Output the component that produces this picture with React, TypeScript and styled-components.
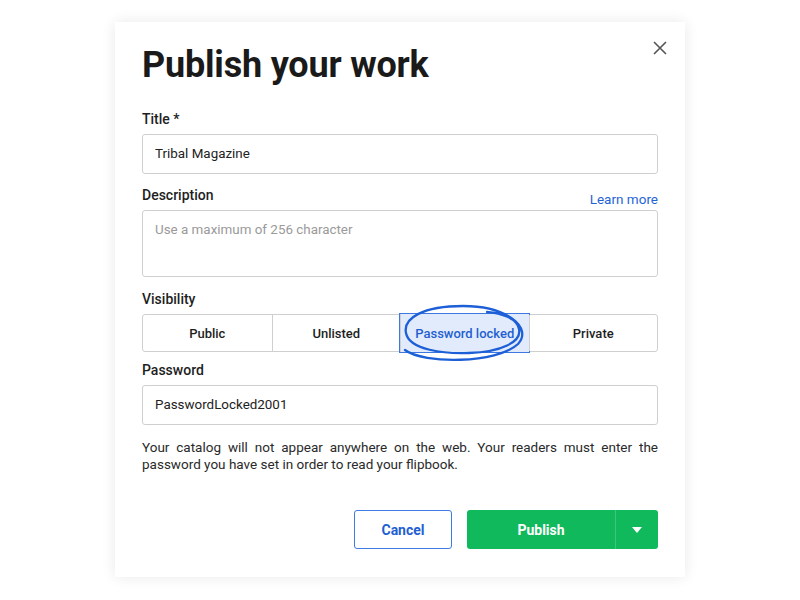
import styled, { createGlobalStyle } from 'styled-components';

const GlobalStyle = createGlobalStyle`
  html, body {
    margin: 0;
    padding: 0;
    background: #ffffff;
  }
  body {
    font-family: Roboto, "Noto Sans", "Liberation Sans", sans-serif;
    color: #1e1e1e;
  }
`;

const Page = styled.div`
  width: 800px;
  height: 600px;
  padding-top: 22px;
  box-sizing: border-box;
  display: flex;
  justify-content: center;
`;

const Card = styled.div`
  position: relative;
  width: 570px;
  height: 555px;
  box-sizing: border-box;
  padding: 22px 27px 28px;
  background: #fff;
  box-shadow: 0 0 14px rgba(0, 0, 0, 0.09);
  display: flex;
  flex-direction: column;
`;

const CloseButton = styled.button`
  position: absolute;
  top: 18px;
  right: 17px;
  width: 16px;
  height: 16px;
  padding: 0;
  border: none;
  background: none;
  cursor: pointer;
`;

const Heading = styled.h1`
  margin: 0;
  font-size: 36px;
  line-height: 42px;
  font-weight: 700;
  color: #1a1a1a;
  letter-spacing: -0.2px;
`;

const Field = styled.div<{ $gap: number }>`
  margin-top: ${(p) => p.$gap}px;
  display: flex;
  flex-direction: column;
`;

const LabelRow = styled.div`
  display: flex;
  justify-content: space-between;
  height: 24px;
  margin-bottom: 1px;
`;

const Label = styled.label`
  font-size: 14px;
  line-height: 20px;
  font-weight: 500;
  color: #1e1e1e;
  margin-bottom: 5px;
`;

const LinkText = styled.a`
  align-self: flex-end;
  font-size: 13.5px;
  line-height: 20px;
  color: #1f64d6;
  text-decoration: none;
`;

const Input = styled.div<{ $height: number; $placeholder?: boolean }>`
  height: ${(p) => p.$height}px;
  box-sizing: border-box;
  border: 1px solid #cfcfcf;
  border-radius: 3px;
  padding: ${(p) => (p.$placeholder ? '10px 12px' : '0 12px')};
  display: flex;
  align-items: ${(p) => (p.$placeholder ? 'flex-start' : 'center')};
  font-size: 13.4px;
  line-height: 18px;
  color: ${(p) => (p.$placeholder ? '#9a9a9a' : '#222')};
`;

const Segmented = styled.div`
  display: grid;
  grid-template-columns: repeat(4, 1fr);
  height: 38px;
  box-sizing: border-box;
  border: 1px solid #cfcfcf;
  border-radius: 3px;
`;

const Segment = styled.div<{ $active?: boolean; $first?: boolean }>`
  position: relative;
  display: flex;
  align-items: center;
  justify-content: center;
  font-size: 13px;
  font-weight: 500;
  color: ${(p) => (p.$active ? '#1f5fd2' : '#1e1e1e')};
  background: ${(p) => (p.$active ? '#e2ebfb' : 'transparent')};
  border-left: ${(p) => (p.$first ? 'none' : '1px solid #cfcfcf')};
  outline: ${(p) => (p.$active ? '1px solid #3d78e0' : 'none')};
  margin: ${(p) => (p.$active ? '-1px 0' : '0')};
`;

const Scribble = styled.svg`
  position: absolute;
  left: 50%;
  top: 50%;
  width: 140px;
  height: 70px;
  transform: translate(-50%, -50%);
  margin-top: 6px;
  overflow: visible;
  pointer-events: none;
`;

const Note = styled.p`
  margin: 14px 0 0;
  font-size: 13.5px;
  line-height: 17px;
  color: #2a2a2a;
  text-align: justify;
`;

const Actions = styled.div`
  margin-top: auto;
  display: flex;
  justify-content: flex-end;
  gap: 15px;
`;

const CancelButton = styled.button`
  width: 98px;
  height: 39px;
  border: 1px solid #3f7be3;
  border-radius: 3px;
  background: #fff;
  color: #1f5fd2;
  font-family: inherit;
  font-size: 14px;
  font-weight: 700;
`;

const SplitButton = styled.div`
  display: flex;
  width: 191px;
  height: 39px;
  border-radius: 3px;
  overflow: hidden;
  background: #11b95d;
`;

const MainPart = styled.button`
  flex: 1;
  border: none;
  background: transparent;
  color: #fff;
  font-family: inherit;
  font-size: 14px;
  font-weight: 700;
`;

const CaretPart = styled.button`
  width: 43px;
  border: none;
  border-left: 1px solid #3cc77b;
  background: transparent;
  display: flex;
  align-items: center;
  justify-content: center;
`;

const options = ['Public', 'Unlisted', 'Password locked', 'Private'];

export default function App() {
  return (
    <>
      <GlobalStyle />
      <Page>
        <Card>
          <CloseButton aria-label="Close">
            <svg width="16" height="16" viewBox="0 0 16 16">
              <path d="M2 2 L14 14 M14 2 L2 14" stroke="#555" strokeWidth="1.6" />
            </svg>
          </CloseButton>
          <Heading>Publish your work</Heading>

          <Field $gap={23}>
            <Label>Title *</Label>
            <Input $height={40}>Tribal Magazine</Input>
          </Field>

          <Field $gap={11}>
            <LabelRow>
              <Label>Description</Label>
              <LinkText>Learn more</LinkText>
            </LabelRow>
            <Input $height={67} $placeholder>
              Use a maximum of 256 character
            </Input>
          </Field>

          <Field $gap={12}>
            <Label>Visibility</Label>
            <Segmented>
              {options.map((o, i) => (
                <Segment key={o} $active={i === 2} $first={i === 0}>
                  {o}
                  {i === 2 && (
                    <Scribble viewBox="0 0 140 70">
                      <path
                        d="M10 46 C28 60 102 60 123 40 C138 24 112 2 68 2 C28 2 8 14 11 29 C14 46 50 50 74 49 C106 48 127 38 124 25 C122 14 106 9 92 8"
                        fill="none"
                        stroke="#1c5fd6"
                        strokeWidth="2.3"
                        strokeLinecap="round"
                        strokeLinejoin="round"
                      />
                    </Scribble>
                  )}
                </Segment>
              ))}
            </Segmented>
          </Field>

          <Field $gap={8}>
            <Label>Password</Label>
            <Input $height={40}>PasswordLocked2001</Input>
          </Field>

          <Note>
            Your catalog will not appear anywhere on the web. Your readers must enter the password
            you have set in order to read your flipbook.
          </Note>

          <Actions>
            <CancelButton>Cancel</CancelButton>
            <SplitButton>
              <MainPart>Publish</MainPart>
              <CaretPart aria-label="More">
                <svg width="10" height="6" viewBox="0 0 10 6">
                  <path d="M0 0 H10 L5 6 Z" fill="#fff" />
                </svg>
              </CaretPart>
            </SplitButton>
          </Actions>
        </Card>
      </Page>
    </>
  );
}
